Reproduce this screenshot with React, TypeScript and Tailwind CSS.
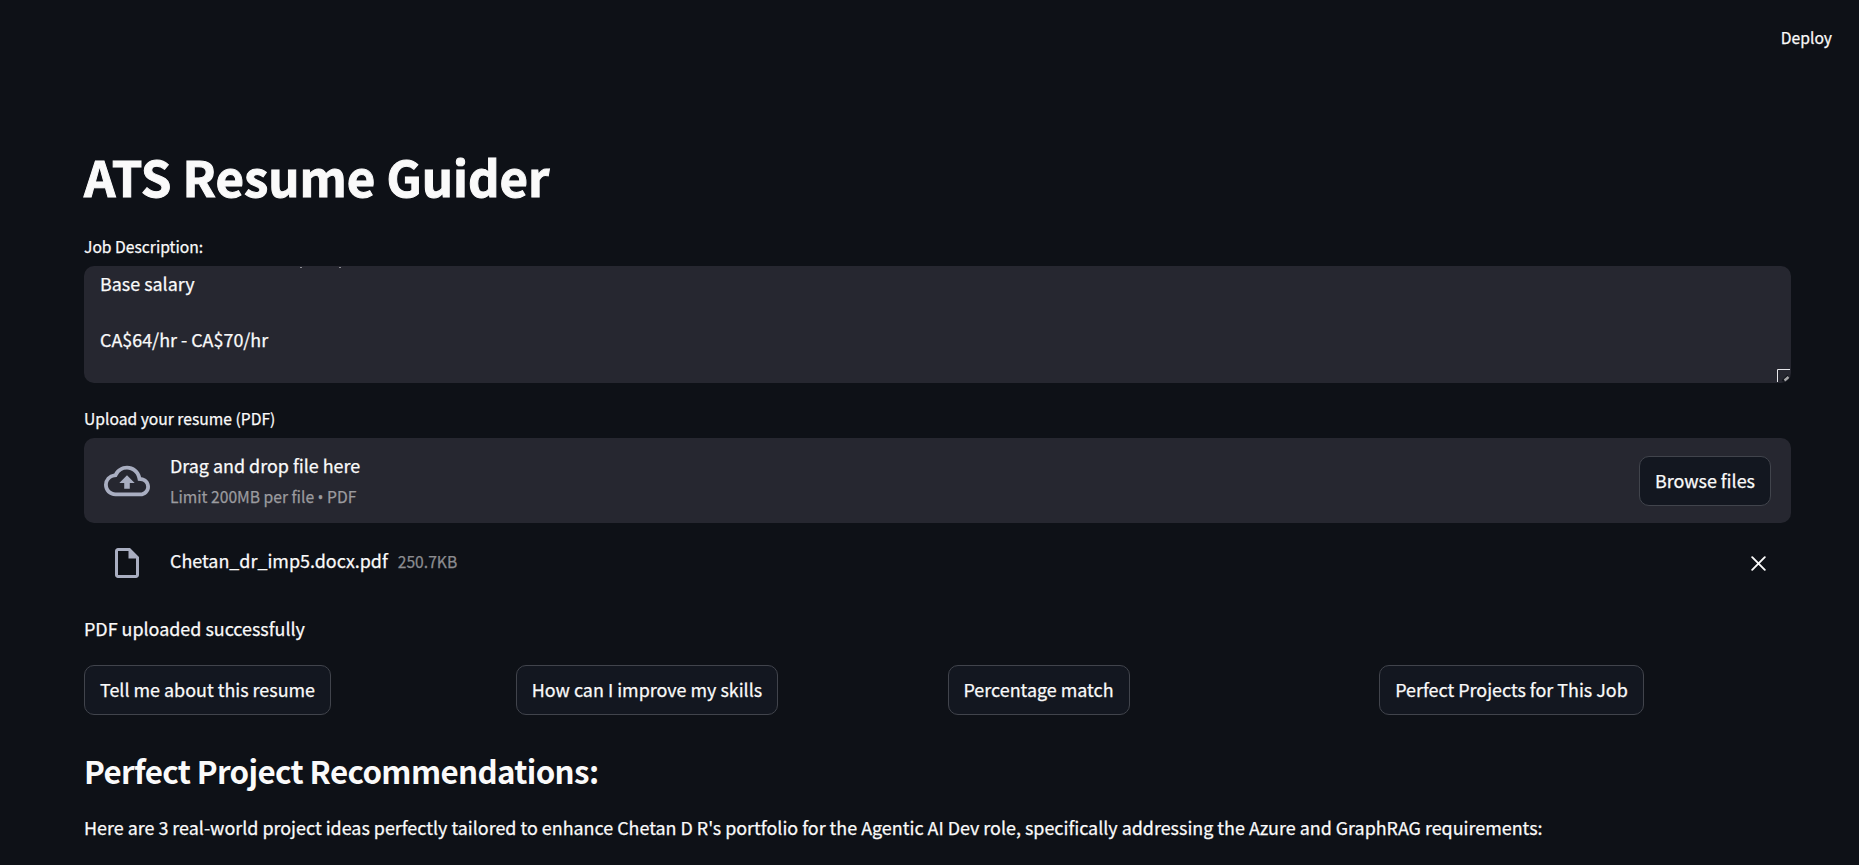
import { MdOutlineCloudUpload, MdOutlineInsertDriveFile } from 'react-icons/md';

interface UploadedFile {
  name: string;
  size: string;
}

const file: UploadedFile = { name: 'Chetan_dr_imp5.docx.pdf', size: '250.7KB' };

const actions = [
  'Tell me about this resume',
  'How can I improve my skills',
  'Percentage match',
  'Perfect Projects for This Job',
];

function Button({ label }: { label: string }) {
  return (
    <button className="h-[50px] shrink-0 whitespace-nowrap rounded-[10px] border border-[#41444c] bg-[#131720] px-[15px] pb-[2px] text-[17.91px] leading-[28px]">
      {label}
    </button>
  );
}

function JobDescription() {
  return (
    <section>
      <label className="block h-[32px] text-[15.67px] leading-[26px]">Job Description:</label>
      <div className="relative h-[117px] overflow-hidden rounded-[10px] bg-[#262730] px-4 pt-[3px] text-[17.91px] leading-[28px]">
        {/* descenders of the line scrolled out above */}
        <span className="absolute left-[216px] top-px h-px w-[2px] bg-[#8e8f94]" />
        <span className="absolute left-[255px] top-px h-px w-[2px] bg-[#8e8f94]" />
        <p>Base salary</p>
        <p className="mt-[28px]">CA$64/hr - CA$70/hr</p>
        {/* resize grip */}
        <svg className="absolute bottom-0 right-0" width="14" height="14" viewBox="0 0 14 14" fill="none">
          <path d="M0.5 13V0.5H13" stroke="#e6e6ea" />
          <path d="M5.5 12L11 6.5" stroke="#0e1117" strokeWidth="2" />
          <path d="M7.5 11.5L11.5 8" stroke="#a6a6a8" strokeWidth="2.4" />
        </svg>
      </div>
    </section>
  );
}

function ResumeUpload() {
  return (
    <section className="mt-[20px]">
      <label className="block h-[35px] pt-[3px] text-[15.67px] leading-[26px]">Upload your resume (PDF)</label>
      <div className="flex h-[85px] items-center rounded-[10px] bg-[#262730] px-5">
        <MdOutlineCloudUpload size={46} className="text-[#a9aec1]" />
        <div className="ml-5 mt-[3px] flex-1">
          <p className="text-[17.91px] leading-[30px]">Drag and drop file here</p>
          <p className="text-[15.67px] leading-[33px] text-[#9b9b9f]">
            Limit 200MB per file <span className="font-['Open_Sans']">•</span> PDF
          </p>
        </div>
        <Button label="Browse files" />
      </div>
      <div className="flex h-[80px] items-center px-5">
        <div className="flex w-[46px] justify-center">
          <MdOutlineInsertDriveFile size={36} className="text-[#a9aec1]" />
        </div>
        <div className="ml-5 flex flex-1 items-baseline gap-[10px] pb-[6px]">
          <span className="text-[17.91px]">{file.name}</span>
          <span className="text-[15.67px] text-[#8b8c90]">{file.size}</span>
        </div>
        <button className="mr-[5px]" aria-label="Remove file">
          <svg width="15" height="15" viewBox="0 0 15 15" fill="none" stroke="currentColor" strokeWidth="1.9" strokeLinecap="round">
            <path d="M1.2 1.2l12.6 12.6M13.8 1.2L1.2 13.8" />
          </svg>
        </button>
      </div>
    </section>
  );
}

export default function App() {
  return (
    <div className="h-[865px] overflow-hidden bg-[#0e1117] font-['Noto_Sans_CJK_SC',sans-serif] text-[#fafafa] [-webkit-text-stroke:0.25px]">
      <header className="flex h-[75px] items-center justify-end pr-[27px] text-[15.67px]">
        <span>Deploy</span>
      </header>

      <main className="pl-[84px] pr-[68px] pt-[70px]">
        <h1 className="h-[89px] text-[49.1px] font-bold leading-[61px] [-webkit-text-stroke:1px]">ATS Resume Guider</h1>
        <JobDescription />
        <ResumeUpload />

        <p className="mt-[9px] text-[17.91px] leading-[32px]">PDF uploaded successfully</p>

        <div className="mt-[21px] grid grid-cols-4 gap-5">
          {actions.map((label) => (
            <div key={label}>
              <Button label={label} />
            </div>
          ))}
        </div>

        <h3 className="mt-[35px] text-[31.3px] font-semibold leading-[42px] tracking-[-0.63px] [-webkit-text-stroke:0px]">
          Perfect Project Recommendations:
        </h3>
        <p className="mt-[19px] whitespace-nowrap text-[17.91px] leading-[32px]">
          Here are 3 real-world project ideas perfectly tailored to enhance Chetan D R's portfolio for the Agentic AI Dev
          role, specifically addressing the Azure and GraphRAG requirements:
        </p>
      </main>
    </div>
  );
}
